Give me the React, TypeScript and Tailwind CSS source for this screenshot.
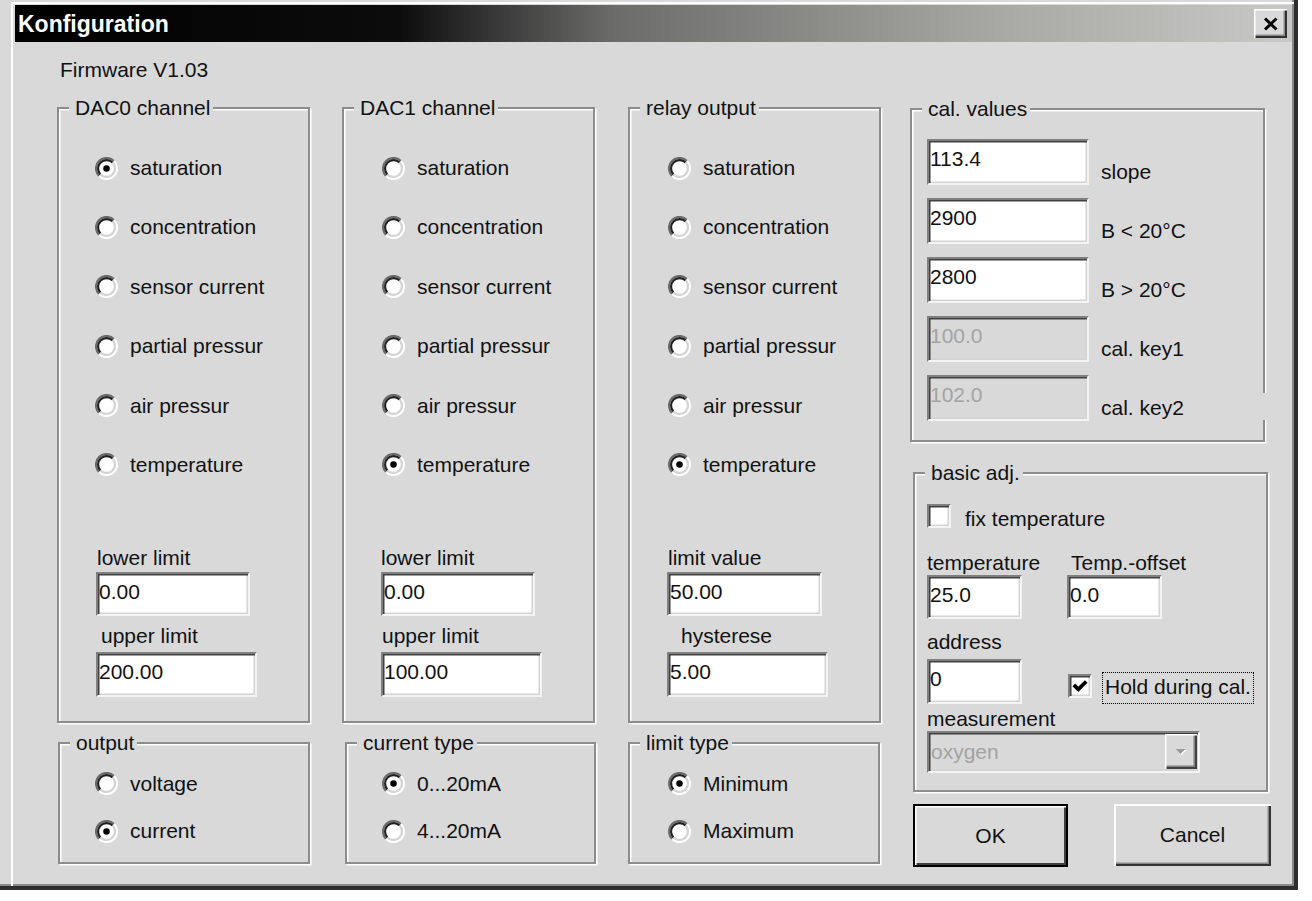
import React from "react";

const OPTIONS = [
  "saturation",
  "concentration",
  "sensor current",
  "partial pressur",
  "air pressur",
  "temperature",
];

const SUNKEN =
  "border-2 border-t-[#808080] border-l-[#808080] border-r-[#f4f4f4] border-b-[#f4f4f4] shadow-[inset_1.5px_1.5px_0_#404040,inset_-1.5px_-1.5px_0_#d4d4d4]";

function RadioMark({ checked }: { checked?: boolean }) {
  return (
    <svg width="23" height="23" viewBox="0 0 12 12" className="shrink-0">
      <circle cx="6" cy="6" r="4.5" fill="#fff" />
      <path d="M2.11 9.89A5.5 5.5 0 0 1 9.89 2.11" fill="none" stroke="#6a6a6a" strokeWidth="1.1" />
      <path d="M9.89 2.11A5.5 5.5 0 0 1 2.11 9.89" fill="none" stroke="#fff" strokeWidth="1.1" />
      <path d="M2.82 9.18A4.5 4.5 0 0 1 9.18 2.82" fill="none" stroke="#202020" strokeWidth="1.1" />
      <path d="M9.18 2.82A4.5 4.5 0 0 1 2.82 9.18" fill="none" stroke="#d4d4d4" strokeWidth="1.1" />
      {checked && <circle cx="6" cy="6" r="1.7" fill="#000" />}
    </svg>
  );
}

function Radio({ label, checked }: { label: string; checked?: boolean }) {
  return (
    <div className="flex h-6 items-center gap-[12px]">
      <RadioMark checked={checked} />
      <span className="whitespace-nowrap">{label}</span>
    </div>
  );
}

function CheckBox({ checked }: { checked?: boolean }) {
  return (
    <div className={`flex h-[24px] w-[24px] shrink-0 items-center justify-center bg-white ${SUNKEN}`}>
      {checked && (
        <svg width="18" height="18" viewBox="0 0 16 16">
          <path d="M2.5 7L6.5 11L13.5 4" fill="none" stroke="#000" strokeWidth="3.4" />
        </svg>
      )}
    </div>
  );
}

function Field({
  value,
  className = "",
  disabled,
}: {
  value: string;
  className?: string;
  disabled?: boolean;
}) {
  return (
    <div
      className={`shrink-0 pl-[1px] pt-[6px] leading-6 ${SUNKEN} ${
        disabled ? "bg-[#d9d9d9] text-[#a3a3a3]" : "bg-white"
      } ${className}`}
    >
      {value}
    </div>
  );
}

function Group({
  legend,
  className = "",
  children,
}: {
  legend: string;
  className?: string;
  children?: React.ReactNode;
}) {
  return (
    <div
      className={`relative shrink-0 border-2 border-[#8c8c8c] shadow-[inset_1.5px_1.5px_0_#fff,1.5px_1.5px_0_#fff] ${className}`}
    >
      <span className="absolute left-[10px] top-[-13px] whitespace-nowrap bg-[#d9d9d9] pl-[6px] pr-[3px] leading-6">
        {legend}
      </span>
      {children}
    </div>
  );
}

type FieldDef = { label: string; labelClass: string; value: string; width: string };

function ChannelGroup({
  legend,
  checked,
  radioPad,
  fields,
}: {
  legend: string;
  checked: number;
  radioPad: string;
  fields: FieldDef[];
}) {
  const [a, b] = fields;
  return (
    <Group legend={legend} className="h-[616px] w-[253px]">
      <div className={`flex flex-col gap-[35.4px] pt-[47px] ${radioPad}`}>
        {OPTIONS.map((o, i) => (
          <Radio key={o} label={o} checked={i === checked} />
        ))}
      </div>
      <div className="mt-[69px] flex flex-col items-start">
        <span className={`leading-6 ${a.labelClass}`}>{a.label}</span>
        <Field value={a.value} className={`ml-[37px] mt-[2px] h-[44px] ${a.width}`} />
        <span className={`mt-[8px] leading-6 ${b.labelClass}`}>{b.label}</span>
        <Field value={b.value} className={`ml-[37px] mt-[4px] h-[45px] ${b.width}`} />
      </div>
    </Group>
  );
}

function ChoiceGroup({
  legend,
  options,
  checked,
  pad,
  className,
}: {
  legend: string;
  options: string[];
  checked: number;
  pad: string;
  className: string;
}) {
  return (
    <Group legend={legend} className={`mt-[19px] h-[122px] ${className}`}>
      <div className={`flex flex-col gap-[23.5px] pt-[27.5px] ${pad}`}>
        {options.map((o, i) => (
          <Radio key={o} label={o} checked={i === checked} />
        ))}
      </div>
    </Group>
  );
}

const CAL = [
  { value: "113.4", label: "slope" },
  { value: "2900", label: "B < 20°C" },
  { value: "2800", label: "B > 20°C" },
  { value: "100.0", label: "cal. key1", disabled: true },
  { value: "102.0", label: "cal. key2", disabled: true },
];

export default function App() {
  return (
    <div className="h-[901px] w-[1312px] overflow-hidden bg-white font-['Liberation_Sans',Arial,sans-serif] text-[21px] leading-6 text-[#111]">
      <div className="h-[890px] w-[1298px] border-b-4 border-r-4 border-[#2e2e2e] bg-[#d9d9d9] pl-[11px] pt-[2px] shadow-[inset_-2px_-2px_0_#888]">
        <div className="h-full border-l-2 border-t-2 border-white pl-[2px] pt-[1px]">
          {/* Title bar */}
          <div className="flex h-[37px] w-[1277px] items-center justify-between bg-[linear-gradient(90deg,#000_0%,#0c0c0c_30%,#404040_39%,#6c6c6a_47%,#a8a8a4_77%,#c8c8c6_100%)] pl-[3px] pr-[5px]">
            <span className="text-[23px] font-bold text-white">Konfiguration</span>
            <div className="flex h-[29px] w-[33px] items-center justify-center bg-[#d9d9d9] shadow-[inset_1.5px_1.5px_0_#fff,inset_-2px_-2px_0_#303030,inset_-3.5px_-3.5px_0_#8a8a8a]">
              <svg width="16" height="14" viewBox="0 0 16 14">
                <path d="M2 1.5L13.5 12.5M13.5 1.5L2 12.5" stroke="#000" strokeWidth="3" />
              </svg>
            </div>
          </div>

          <div className="ml-[45px] mt-[15.5px] leading-6">Firmware V1.03</div>

          <div className="mt-[25.5px] flex items-start">
            {/* Column 1 */}
            <div className="ml-[42px] flex w-[253px] shrink-0 flex-col items-start">
              <ChannelGroup
                legend="DAC0 channel"
                checked={0}
                radioPad="pl-[36px]"
                fields={[
                  { label: "lower limit", labelClass: "ml-[38px]", value: "0.00", width: "w-[154px]" },
                  { label: "upper limit", labelClass: "ml-[42px]", value: "200.00", width: "w-[161px]" },
                ]}
              />
              <ChoiceGroup
                legend="output"
                options={["voltage", "current"]}
                checked={1}
                pad="pl-[35px]"
                className="ml-px w-[252px]"
              />
            </div>

            {/* Column 2 */}
            <div className="ml-[32px] flex w-[254px] shrink-0 flex-col items-start">
              <ChannelGroup
                legend="DAC1 channel"
                checked={5}
                radioPad="pl-[38px]"
                fields={[
                  { label: "lower limit", labelClass: "ml-[37px]", value: "0.00", width: "w-[154px]" },
                  { label: "upper limit", labelClass: "ml-[38px]", value: "100.00", width: "w-[161px]" },
                ]}
              />
              <ChoiceGroup
                legend="current type"
                options={["0...20mA", "4...20mA"]}
                checked={0}
                pad="pl-[35px]"
                className="ml-[3px] w-[251px]"
              />
            </div>

            {/* Column 3 */}
            <div className="ml-[32px] flex w-[252px] shrink-0 flex-col items-start">
              <ChannelGroup
                legend="relay output"
                checked={5}
                radioPad="pl-[38px]"
                fields={[
                  { label: "limit value", labelClass: "ml-[38px]", value: "50.00", width: "w-[155px]" },
                  { label: "hysterese", labelClass: "ml-[51px]", value: "5.00", width: "w-[161px]" },
                ]}
              />
              <ChoiceGroup
                legend="limit type"
                options={["Minimum", "Maximum"]}
                checked={0}
                pad="pl-[38px]"
                className="w-[252px]"
              />
            </div>

            {/* Column 4 */}
            <div className="ml-[30px] flex shrink-0 flex-col items-start">
              <Group legend="cal. values" className="mt-px h-[334px] w-[355px]">
                <div className="flex flex-col gap-[13px] pl-[15px] pt-[29px]">
                  {CAL.map((c) => (
                    <div key={c.label} className="flex items-start">
                      <Field value={c.value} disabled={c.disabled} className="h-[46px] w-[162px]" />
                      <span className="ml-[12px] mt-[21px] whitespace-nowrap leading-6">{c.label}</span>
                    </div>
                  ))}
                </div>
                <div className="absolute right-[-4px] top-[283px] h-[27px] w-[6px] bg-[#d9d9d9]" />
              </Group>

              <Group legend="basic adj." className="ml-[3px] mt-[30px] h-[320px] w-[355px]">
                <div className="flex flex-col items-start pl-[12px] pt-[30px]">
                  <div className="flex items-start gap-[14px]">
                    <CheckBox />
                    <span className="mt-[3px] leading-6">fix temperature</span>
                  </div>
                  <div className="mt-[19.5px] flex items-start">
                    <div className="flex w-[140px] flex-col items-start">
                      <span className="whitespace-nowrap leading-6">temperature</span>
                      <Field value="25.0" className="h-[44px] w-[95px]" />
                    </div>
                    <div className="flex flex-col items-start">
                      <span className="ml-[4px] whitespace-nowrap leading-6">Temp.-offset</span>
                      <Field value="0.0" className="h-[44px] w-[95px]" />
                    </div>
                  </div>
                  <span className="mt-[11.5px] leading-6">address</span>
                  <div className="mt-[4.5px] flex items-start">
                    <Field value="0" className="h-[45px] w-[95px]" />
                    <div className="ml-[46px] mt-[15px]">
                      <CheckBox checked />
                    </div>
                    <span className="ml-[10px] mt-[13px] h-[32px] whitespace-nowrap border border-dotted border-black px-[2px] pt-[2px] leading-6">
                      Hold during cal.
                    </span>
                  </div>
                  <span className="mt-[3px] leading-6">measurement</span>
                  <div className={`flex h-[42px] w-[273px] items-center bg-[#d9d9d9] pr-[1px] ${SUNKEN}`}>
                    <span className="flex-1 pl-[2px] text-[#a3a3a3]">oxygen</span>
                    <div className="flex h-[35px] w-[32px] items-center justify-center bg-[#d9d9d9] shadow-[inset_1.5px_1.5px_0_#fff,inset_-2px_-2px_0_#404040,inset_-3.5px_-3.5px_0_#808080]">
                      <svg width="14" height="8" viewBox="0 0 14 8">
                        <path d="M2.5 2h10l-5 5z" fill="#fff" />
                        <path d="M1.5 1h10l-5 5z" fill="#9a9a9a" />
                      </svg>
                    </div>
                  </div>
                </div>
              </Group>

              <div className="ml-[3px] mt-[12px] flex gap-[46px]">
                <button className="h-[63px] w-[155px] border-2 border-black bg-[#d9d9d9] shadow-[inset_1.5px_1.5px_0_#fff,inset_-2px_-2px_0_#404040]">
                  OK
                </button>
                <button className="h-[62px] w-[157px] bg-[#d9d9d9] shadow-[inset_2px_2px_0_#fff,inset_-2px_-2px_0_#333,inset_-3.5px_-3.5px_0_#888]">
                  Cancel
                </button>
              </div>
            </div>
          </div>
        </div>
      </div>
    </div>
  );
}
